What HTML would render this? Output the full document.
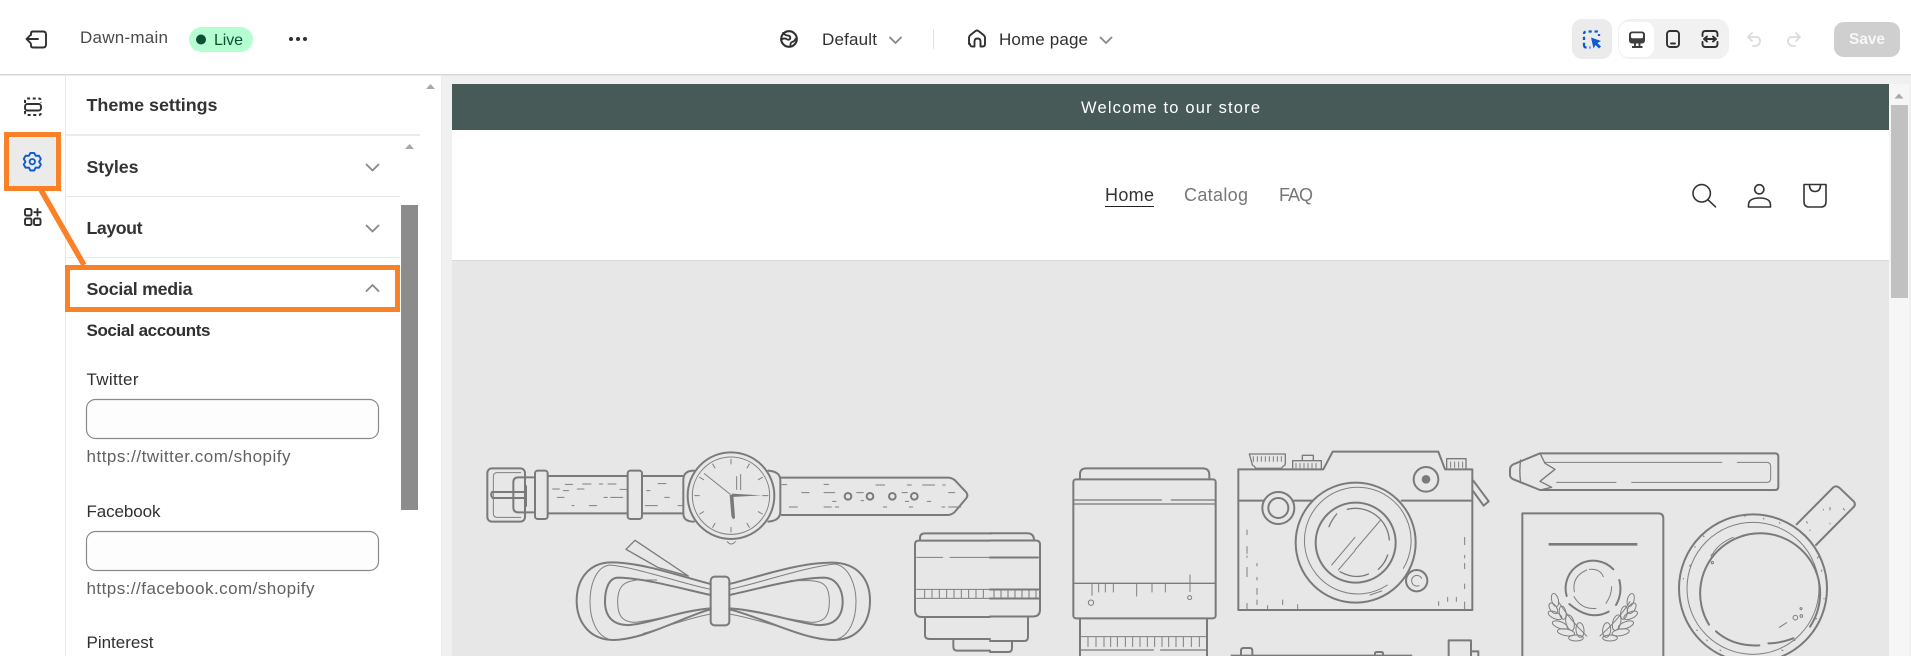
<!DOCTYPE html>
<html lang="en"><head><meta charset="utf-8"><title>Theme editor</title>
<style>
html,body{margin:0;padding:0;width:1911px;height:656px;overflow:hidden;background:#fff}
svg{display:block}
text{font-family:"Liberation Sans",sans-serif}
.b{font-weight:700;fill:#333;font-size:17.800px}
.r{fill:#303030;font-size:17px}
.h{fill:#616161;font-size:17px}
.i{fill:none;stroke:#303030;stroke-width:1.9;stroke-linecap:round;stroke-linejoin:round}
.c{fill:none;stroke:#8a8a8a;stroke-width:1.900;stroke-linecap:round;stroke-linejoin:round}
.s{fill:none;stroke:#7a7a7a;stroke-width:6;stroke-linecap:round;stroke-linejoin:round}
.t{fill:none;stroke:#7f7f7f;stroke-width:3;stroke-linecap:round;stroke-linejoin:round}
.m{fill:none;stroke:#7a7a7a;stroke-width:4;stroke-linecap:round;stroke-linejoin:round}
.k{fill:none;stroke:#333;stroke-width:1.6;stroke-linecap:round;stroke-linejoin:round}
</style></head><body>
<svg width="1911" height="656" viewBox="0 0 1911 656" xmlns="http://www.w3.org/2000/svg">
<rect width="1911" height="656" fill="#fff"/>
<!-- preview bg -->
<rect x="441" y="74" width="1470" height="582" fill="#f0f0f0"/>
<rect x="1889" y="84" width="20" height="572" fill="#f6f6f6"/>
<!-- topbar -->
<rect x="0" y="74" width="1911" height="1.5" fill="#d8d8d8"/>
<path class="i" d="M31 35v-1.500q0-2 2-2h10q3 0 3 3v10q0 3-3 3H33q-2 0-2-2V44M38 39H26.500M30.500 35l-4 4 4 4"/>
<text class="r" x="80" y="43" textLength="88" lengthAdjust="spacing" style="fill:#4a4a4a">Dawn-main</text>
<rect x="189" y="27" width="64" height="25" rx="12.500" fill="#b4fed2"/>
<circle cx="201" cy="39.500" r="5" fill="#0c5132"/>
<text x="214" y="45" font-size="16" textLength="29" lengthAdjust="spacing" fill="#0c5132">Live</text>
<circle cx="291" cy="39" r="2" fill="#303030"/><circle cx="298" cy="39" r="2" fill="#303030"/><circle cx="305" cy="39" r="2" fill="#303030"/>
<circle cx="789" cy="39" r="7.800" fill="none" stroke="#303030" stroke-width="2.100"/><path d="M783 33q3 3 5.500 2.500 2.500 1 1.500 3.500-2 1.500-3.500 0-3-1.500-5.500 1M790.500 46q-.5-3 1.500-4 2.500-.5 3.500-3" fill="none" stroke="#303030" stroke-width="1.800" stroke-linecap="round" stroke-linejoin="round"/>
<text class="r" x="822" y="45" textLength="55" lengthAdjust="spacing">Default</text>
<path class="c" d="M890 37.500l5.500 5.500 5.500-5.500"/>
<rect x="933" y="29" width="1" height="20" fill="#e3e3e3"/>
<path class="i" d="M969 44v-6q0-2 1.500-3l5-4q1.500-1 3 0l5 4q1.500 1 1.500 3v6q0 2.500-2.500 2.500h-2v-5q0-3-3-3t-3 3v5h-2q-2.500 0-2.500-2.500z"/>
<text class="r" x="999" y="45" textLength="89" lengthAdjust="spacing">Home page</text>
<path class="c" d="M1100.500 37.500l5.500 5.500 5.500-5.500"/>
<!-- toolbar -->
<rect x="1572" y="19" width="40" height="40" rx="10" fill="#ebebeb"/>
<rect x="1618" y="19" width="111" height="40" rx="12" fill="#f1f1f1"/>
<rect x="1619" y="22" width="35" height="35" rx="9" fill="#fff"/>
<path d="M1584 46v-12q0-2.500 2.500-2.500h10q2.500 0 2.500 2.500v2M1584 46q.5 1.500 2.500 1.500h4" fill="none" stroke="#0b5ccc" stroke-width="2.300" stroke-dasharray="3.200 2.800" stroke-linecap="butt"/>
<path d="M1591 37.500l10 3.500-3.500 2 3.500 3.500-2 2-3.500-3.500-2 3.500z" fill="#0b5ccc"/>
<rect x="1629" y="31.500" width="16" height="12" rx="3" fill="#3f3f3f"/><rect x="1631" y="33.300" width="12" height="5" rx="1.500" fill="#fff"/>
<path d="M1635 43v3.500M1639.500 43v3.500M1632 47h10.500" stroke="#3f3f3f" stroke-width="1.900" fill="none"/>
<rect x="1667" y="31" width="12" height="16" rx="3" class="i"/><path class="i" d="M1671 43.500h4"/>
<path class="i" d="M1702.500 36v-2q0-3 3-3h9q3 0 3 3v2M1702.500 42v2q0 3 3 3h9q3 0 3-3v-2M1704 39h12M1707 36.500L1704 39l3 2.500M1713 36.500l3 2.500-3 2.500"/>
<path d="M1752 33l-4 4 4 4M1748 37h8q4 0 4 4t-4 5h-3" fill="none" stroke="#dcdcdc" stroke-width="1.800" stroke-linecap="round" stroke-linejoin="round"/>
<path d="M1796 33l4 4-4 4M1800 37h-8q-4 0-4 4t4 5h3" fill="none" stroke="#dcdcdc" stroke-width="1.800" stroke-linecap="round" stroke-linejoin="round"/>
<rect x="1834" y="22" width="66" height="35" rx="10" fill="#cfcfcf"/>
<text x="1849" y="44" font-size="15.500" font-weight="700" fill="#f7f7f7" textLength="36" lengthAdjust="spacing">Save</text>
<!-- rail + panel -->
<rect x="65" y="75" width="1" height="581" fill="#e8e8e8"/>
<rect x="441" y="75" width="1" height="581" fill="#ececec"/>
<path d="M25 103v-2q0-2.500 2.500-2.500h11q2.500 0 2.500 2.500v2M25 111v1.500q0 2.500 2.500 2.500h11q2.500 0 2.500-2.500V111" fill="none" stroke="#303030" stroke-width="2" stroke-dasharray="3 2.600"/>
<rect x="25" y="104" width="16" height="6.500" rx="2.500" class="i"/>
<rect x="9" y="137" width="47" height="49" rx="4" fill="#ebebeb"/>
<g transform="translate(32.300 161.700)"><path d="M-1.870-8.800 1.870-8.800 3.400-5.890 6.690-6.020 8.560-2.780 6.800 0 8.560 2.780 6.690 6.020 3.400 5.890 1.870 8.800-1.870 8.800-3.400 5.890-6.690 6.020-8.560 2.780-6.800 0-8.560-2.780-6.690-6.020-3.400-5.890Z" fill="none" stroke="#0b5ccc" stroke-width="1.900" stroke-linejoin="round"/><circle r="2.700" fill="none" stroke="#0b5ccc" stroke-width="1.800"/></g>
<rect x="25" y="209" width="6.500" height="6.500" rx="1.500" class="i"/><rect x="25" y="218.500" width="6.500" height="6.500" rx="1.500" class="i"/><rect x="34" y="218.500" width="6.500" height="6.500" rx="1.500" class="i"/><path class="i" d="M37.500 209v6.500M34.300 212.200h6.400"/>
<text class="b" x="86.500" y="111" textLength="131" lengthAdjust="spacing" style="font-size:17.900px">Theme settings</text>
<rect x="66" y="134" width="354" height="2" fill="#ebebeb"/>
<path d="M405 149l4.500-5 4.500 5z" fill="#a8a8a8"/><path d="M426 89l4.500-5 4.500 5z" fill="#a8a8a8"/>
<text class="b" x="86.500" y="173" textLength="52" lengthAdjust="spacing">Styles</text>
<path class="c" d="M366.500 164.500l6 6 6-6"/>
<rect x="66" y="196" width="334" height="1" fill="#e6e6e6"/>
<text class="b" x="86.500" y="234" textLength="56" lengthAdjust="spacing">Layout</text>
<path class="c" d="M366.500 225.500l6 6 6-6"/>
<rect x="66" y="257" width="334" height="1" fill="#e6e6e6"/>
<rect x="401" y="205" width="17" height="305" fill="#8c8c8c"/>
<text class="b" x="86.500" y="295" textLength="106" lengthAdjust="spacing">Social media</text>
<path class="c" d="M366.500 291l6-6 6 6"/>
<text x="86.500" y="336" font-size="17" font-weight="700" fill="#303030" textLength="124" lengthAdjust="spacing">Social accounts</text>
<text class="r" x="86.500" y="385" textLength="52" lengthAdjust="spacing">Twitter</text>
<rect x="86.500" y="399.500" width="292" height="39" rx="9" fill="#fdfdfd" stroke="#8a8a8a" stroke-width="1.200"/>
<text class="h" x="86.500" y="462" textLength="204" lengthAdjust="spacing">https://twitter.com/shopify</text>
<text class="r" x="86.500" y="517" textLength="74" lengthAdjust="spacing">Facebook</text>
<rect x="86.500" y="531.500" width="292" height="39" rx="9" fill="#fdfdfd" stroke="#8a8a8a" stroke-width="1.200"/>
<text class="h" x="86.500" y="594" textLength="228" lengthAdjust="spacing">https://facebook.com/shopify</text>
<text class="r" x="86.500" y="648" textLength="67" lengthAdjust="spacing">Pinterest</text>
<!-- orange annotations -->
<rect x="6.500" y="134.500" width="52" height="54" fill="none" stroke="#fb8128" stroke-width="5"/>
<path d="M41 190L84 265" stroke="#fb8128" stroke-width="5.500" fill="none"/>
<rect x="67.500" y="267.500" width="330" height="42" fill="none" stroke="#fb8128" stroke-width="5"/>
<!-- preview -->
<rect x="452" y="84" width="1437" height="572" fill="#e7e7e7"/>
<rect x="452" y="84" width="1437" height="46" fill="#475a58"/>
<rect x="452" y="130" width="1437" height="130" fill="#fff"/>
<rect x="452" y="260" width="1437" height="1" fill="#d9d9d9"/>
<text x="1081" y="113" font-size="16.500" fill="#fff" textLength="179" lengthAdjust="spacing">Welcome to our store</text>
<text x="1105" y="201" font-size="18" fill="#333" textLength="49" lengthAdjust="spacing">Home</text>
<rect x="1105" y="206" width="49" height="1" fill="#222"/>
<text x="1184" y="201" font-size="18" fill="#777" textLength="64" lengthAdjust="spacing">Catalog</text>
<text x="1279" y="201" font-size="18" fill="#777" textLength="34" lengthAdjust="spacing">FAQ</text>
<circle cx="1701.700" cy="193.300" r="8.700" class="k"/><path class="k" d="M1708 199.800l7.500 7"/>
<circle cx="1759.300" cy="189.300" r="4.600" class="k"/><path class="k" d="M1748.500 207v-2q0-7 11-7t11 7v2z"/>
<path class="k" d="M1804 184.500h22v17q0 5.500-5 5.500h-12q-5 0-5-5.500zM1809.500 184.500q0 7 5.500 7t5.500-7"/>
<path d="M1894.500 98.500l4.500-5 4.500 5z" fill="#a8a8a8"/>
<rect x="1891" y="105" width="17" height="193" fill="#c1c1c1"/>
<!-- illustration: watch + bow -->
<g transform="translate(470 430) scale(.33333)">
<rect x="52" y="115" width="113" height="160" rx="14" class="s"/>
<path class="t" d="M70 230V140q0-12 12-12h70"/><path class="t" d="M70 230v20q0 12 12 12h70"/>
<path class="s" d="M190 142h-45q-15 0-15 15v75q0 15 15 15h45"/>
<path class="s" d="M168 168v60M68 186h95M68 204h95M66 186q-6 9 2 18"/>
<rect x="195" y="122" width="38" height="145" rx="8" class="s" fill="#e7e7e7"/>
<path class="s" d="M235 138h238M235 250h238M517 138h123M517 250h123"/>
<rect x="473" y="122" width="43" height="145" rx="8" class="s"/>
<path class="t" d="M248 177h20M286 163h22M338 162h25M388 162h10M414 162h24M280 182h16M322 177h20M450 178h20M262 202h20M402 202h10M422 202h36M306 227h6M358 227h22M530 182h10M564 161h24M584 202h14M526 227h36M624 227h12"/>
<path class="s" d="M672 122q-32 0-32 28v100q0 25 32 25M895 122q36 3 36 28v95q0 27-36 30"/>
<circle cx="783" cy="197" r="130" class="s" fill="#e7e7e7"/>
<circle cx="783" cy="197" r="116" class="t"/>
<path class="t" d="M772 335q11 14 24 0" />
<path class="t" d="M783 88v14M783 292v14M674 197h14M878 197h16M728 102l7 12M838 102l-7 12M728 292l7-12M838 292l-7-12M689 142l12 7M877 142l-12 7M689 252l12-7M877 252l-12-7"/>
<path class="t" d="M800 140v38M812 133v46"/>
<path class="t" d="M703 131l78 62"/>
<path d="M785 191l90 5-90 5z" fill="#7a7a7a"/><path d="M779 195h11l5 68-4 5q-6-4-7-12z" fill="#7a7a7a"/>
<path class="s" d="M935 143h498q12 0 22 8l32 34q10 11 0 22l-32 38q-10 10-22 10H935"/>
<circle cx="1134" cy="199" r="10" class="s"/><circle cx="1200" cy="199" r="10" class="s"/><circle cx="1267" cy="199" r="10" class="s"/><circle cx="1333" cy="199" r="10" class="s"/>
<path class="t" d="M936 164h14M995 188h22M1062 163h14M1062 188h32M1088 214h10M958 231h24M1062 231h22M1096 231h10M1160 188h20M1218 165h26M1173 212h8M1296 188h16M1312 165h12M1358 165h36M1418 165h8M1436 188h18M1306 214h10M1372 214h10M1240 231h10M1318 231h10M1416 231h8M1436 231h36"/>
<path class="m" d="M468 358l27-27 160 107-90-25z" fill="#e7e7e7"/>
<path class="s" d="M722 462C650 445 520 397 425 397 355 397 320 450 320 512c0 65 40 118 110 118 90 0 210-70 292-92"/>
<path class="s" d="M722 495C650 480 530 445 445 443 415 443 405 480 405 515c0 45 25 73 75 70 60-5 160-45 242-50"/>
<path class="t" d="M722 478C640 462 500 412 420 405 375 410 360 470 360 515c0 55 20 100 55 112"/>
<path class="t" d="M560 450H500C470 455 443 460 443 515c0 35 8 60 50 62 60-5 140-30 229-42"/>
<path class="t" d="M722 552C650 565 560 600 520 610"/>
<path class="s" d="M778 462C850 445 980 398 1085 398 1165 398 1200 450 1200 512c0 70-40 118-110 118-90 0-220-70-312-92"/>
<path class="s" d="M778 495C850 480 970 445 1060 443 1100 443 1118 480 1118 515c0 45-25 73-75 70-60-5-170-45-265-50"/>
<path class="t" d="M778 478C860 462 1000 412 1095 402 1140 410 1158 470 1158 515c0 55-20 100-55 112"/>
<path class="t" d="M960 452h60C1055 455 1078 460 1078 515c0 35-8 60-50 62-60-5-150-30-250-42"/>
<path class="t" d="M778 552C850 565 960 600 1020 620"/>
<rect x="722" y="440" width="56" height="146" rx="12" class="s" fill="#e7e7e7"/>
<path class="s" d="M1350 332v-8q0-14 15-14h200"/>
<path class="s" d="M1560 332h-215q-10 0-10 12v195q0 22 20 22h205"/>
<path class="t" d="M1340 382h78M1440 382h120M1340 478h220M1340 505h220M1364 480v24M1386 480v24M1408 480v24M1430 480v24M1452 480v24M1474 480v24M1496 480v24M1518 480v24M1540 480v24"/>
<path class="s" d="M1365 565v50q0 12 14 12h181"/>
<path class="s" d="M1450 630v20q0 12 12 12h98"/>
</g>
<!-- small lens right half -->
<g fill="none" stroke="#7a7a7a" stroke-width="2" stroke-linecap="round" stroke-linejoin="round">
<path d="M990 533.300h37q7 0 7 7M990 540.500h46q4 0 4 4v65q0 7-7 7h-43M990 557.500h48M990 589.500h49M990 598.500h49M1028 617v20q0 4-4 4h-34M1012 642v6q0 4-4 4h-18"/>
<path stroke-width="1" d="M994 590v8M1001 590v8M1008 590v8M1015 590v8M1022 590v8M1029 590v8M1036 590v8"/>
</g>
<!-- big lens + camera -->
<g transform="translate(1060 430) scale(.33333)">
<path class="s" d="M60 145v-13q0-17 20-17h348q20 0 20 20v10"/>
<rect x="40" y="148" width="427" height="417" rx="8" class="s"/>
<path class="m" d="M42 210h262M334 210h130M42 222h422M42 460h422"/>
<path class="t" d="M96 460v36M116 460v26M136 460v26M160 460v26M230 460v38M276 460v26M316 460v26M390 435v50"/>
<circle cx="93" cy="518" r="8" class="t"/><circle cx="389" cy="503" r="6" class="t"/>
<path class="s" d="M60 566v112M441 566v112"/>
<path class="t" d="M62 620h378M84 622v28M108 622v28M132 622v28M152 622v28M172 622v28M196 622v28M218 622v28M240 622v28M262 622v28M284 622v28M306 622v28M326 622v28M348 622v28M370 622v28M394 622v28M418 622v28"/>
<path class="m" d="M62 660h218M302 660h136"/>
<path class="s" d="M535 118H790L818 65H1135L1155 118H1237V540H535Z"/>
<path class="s" d="M537 212H610M700 212H755M1025 212H1235"/>
<path class="m" d="M568 72h108v28q0 6-6 8l-6 7H588l-6-7q-6-2-6-8z"/>
<path class="t" d="M580 80v14M592 80v14M604 80v14M616 80v14M628 80v14M640 80v14M652 80v14M664 80v14"/>
<path class="m" d="M698 116V92h86v24M727 90V76h33v14"/>
<path class="t" d="M708 100v14M720 100v14M732 100v14M744 100v14M756 100v14M768 100v14"/>
<path class="m" d="M1160 116V86h58v30"/><path class="t" d="M1172 96v16M1184 96v16M1196 96v16M1208 96v16"/>
<circle cx="1098" cy="148" r="37" class="s"/><circle cx="1098" cy="148" r="13" fill="#7a7a7a"/>
<circle cx="655" cy="234" r="48" class="s" fill="#e7e7e7"/><circle cx="655" cy="234" r="30" class="s"/>
<path class="s" d="M1240 152l46 62-15 13-32-44"/>
<circle cx="887" cy="338" r="180" class="s" fill="#e7e7e7"/>
<path class="t" d="M982 465A160 160 0 1 1 1030 415M965 483l-35 12"/>
<circle cx="887" cy="338" r="120" class="s"/>
<path class="m" d="M862 238A102 102 0 0 1 988 330M983 375Q975 400 955 418M925 432Q885 450 840 425M807 290Q815 270 830 252"/>
<path class="t" d="M815 405L885 322M835 420L885 362M885 360L962 270"/>
<circle cx="1070" cy="452" r="32" class="s" fill="#e7e7e7"/>
<path class="t" d="M1085 445a16 16 0 1 0-8 22"/>
<path class="t" d="M561 300v14M561 350v20M561 378v4M561 412v28M591 400v8M591 442v8M591 475v18M591 510v14M561 520v18M623 527v10M668 510v14M713 524v14M1214 322v22M1214 376v8M1214 400v16M1214 462v14M1214 516v22M1136 515v12M1163 502v12M1189 502v12"/>
<path class="m" d="M514 676H1055"/>
<path class="s" d="M543 676v-14q0-8 8-8h18q8 0 8 8v14M945 676v-6q0-4 6-4h12q6 0 6 4v6M1166 678V631h67v47M1233 664h22v14"/>
</g>
<!-- pencil, passport, mug -->
<g transform="translate(1490 430) scale(.33333)">
<path class="s" d="M150 70H855q10 0 10 10v90q0 10-10 10H150L70 148Q60 143 60 135V118Q60 108 70 103Z"/>
<path class="m" d="M92 90q-5 30 0 68"/>
<path class="m" d="M150 70l15 30 30 18-45 36 35 18-35 8"/>
<path class="t" d="M165 97H695M742 97H830Q842 97 842 110V145Q842 157 830 157H425M378 157H200"/>
<path class="s" d="M97 678V250H505Q520 250 520 265V678"/>
<path d="M176 343H442" stroke="#7a7a7a" stroke-width="8" fill="none"/>
<path class="s" d="M230 498A83 83 0 0 1 370 418M388 450Q398 490 378 525M356 545Q300 575 238 522"/>
<path class="t" d="M253 485Q245 440 290 420M298 418Q330 415 340 440M365 470Q365 495 348 520M318 535Q275 540 252 500"/>
<g class="t">
<path d="M205 515Q240 570 290 618M420 515Q385 570 330 618"/>
<ellipse cx="195" cy="510" rx="10" ry="20" transform="rotate(-15 195 510)"/><ellipse cx="190" cy="535" rx="10" ry="18" transform="rotate(-35 190 535)"/><ellipse cx="195" cy="556" rx="10" ry="22" transform="rotate(-65 195 556)"/><ellipse cx="218" cy="548" rx="10" ry="20" transform="rotate(-10 218 548)"/><ellipse cx="210" cy="585" rx="10" ry="24" transform="rotate(-70 210 585)"/><ellipse cx="240" cy="578" rx="12" ry="24" transform="rotate(-15 240 578)"/><ellipse cx="228" cy="607" rx="10" ry="26" transform="rotate(-80 228 607)"/><ellipse cx="270" cy="600" rx="12" ry="22" transform="rotate(-5 270 600)"/><ellipse cx="258" cy="624" rx="9" ry="22" transform="rotate(90 258 624)"/>
<ellipse cx="422" cy="510" rx="10" ry="20" transform="rotate(15 422 510)"/><ellipse cx="425" cy="535" rx="10" ry="18" transform="rotate(35 425 535)"/><ellipse cx="422" cy="556" rx="10" ry="22" transform="rotate(65 422 556)"/><ellipse cx="402" cy="548" rx="10" ry="20" transform="rotate(10 402 548)"/><ellipse cx="408" cy="585" rx="10" ry="24" transform="rotate(70 408 585)"/><ellipse cx="380" cy="578" rx="12" ry="24" transform="rotate(15 380 578)"/><ellipse cx="392" cy="607" rx="10" ry="26" transform="rotate(80 392 607)"/><ellipse cx="350" cy="600" rx="12" ry="22" transform="rotate(5 350 600)"/><ellipse cx="360" cy="624" rx="9" ry="22" transform="rotate(90 360 624)"/>
</g>
<path class="s" d="M920 283L1030 172Q1040 165 1050 175L1092 215Q1098 225 1090 232L978 345"/>
<circle cx="789" cy="475" r="222" class="s" fill="#e7e7e7"/>
<circle cx="789" cy="475" r="198" class="t"/>
<path class="s" d="M657 584A180 180 0 1 1 960 590M910 625Q870 640 835 640M808 646Q730 650 678 604"/>
<path class="t" d="M668 372Q685 340 730 322M868 592L890 578"/>
<path class="t" d="M1000 238v2M1020 232v8M1060 236l4 4M950 275l2 4M960 300v2M1020 280v2M765 258v2M820 265l2 2M868 278l2 2M640 318l2 2M615 350v2M580 445v2M600 405v4M985 380l-3 4M995 420v4M1002 505v2M980 565l-2 2M915 630l-2 2M650 630l2 2M620 600l2 2M690 660l2 2M875 660l4 2"/>
<circle cx="667" cy="377" r="3.500" class="t"/><circle cx="667" cy="398" r="3.500" class="t"/><circle cx="916" cy="563" r="7" class="t"/><circle cx="934" cy="558" r="4" class="t"/><circle cx="933" cy="536" r="3" class="t"/>
</g>
</svg>
</body></html>
